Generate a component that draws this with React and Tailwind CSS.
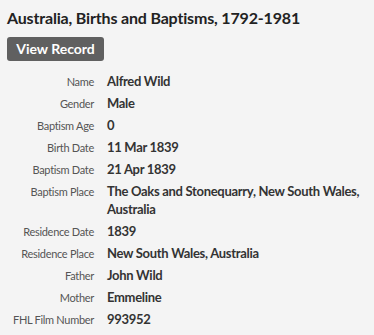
const rows = [
  ['Name', 'Alfred Wild'],
  ['Gender', 'Male'],
  ['Baptism Age', '0'],
  ['Birth Date', '11 Mar 1839'],
  ['Baptism Date', '21 Apr 1839'],
  ['Baptism Place', 'The Oaks and Stonequarry, New South Wales, Australia'],
  ['Residence Date', '1839'],
  ['Residence Place', 'New South Wales, Australia'],
  ['Father', 'John Wild'],
  ['Mother', 'Emmeline'],
  ['FHL Film Number', '993952'],
]

export default function App() {
  return (
    <div
      className="h-[335px] w-[374px] bg-[#f4f4f4] px-[7px] pt-[7px] text-[#333]"
      style={{ fontFamily: 'Lato, "Liberation Sans", sans-serif' }}
    >
      <h1 className="text-[16px] font-bold leading-[22px] tracking-[-0.17px] text-[#222]">
        Australia, Births and Baptisms, 1792-1981
      </h1>
      <button className="mt-[8px] h-[24px] w-[97px] rounded-[3px] bg-[#606060] text-[14px] font-bold leading-[24px] text-white">
        View Record
      </button>

      {/* record fields */}
      <div className="mt-[11px] grid grid-cols-[87px_1fr] items-baseline gap-x-[13px] gap-y-[4px]">
        {rows.map(([label, value]) => (
          <div key={label} className="contents">
            <div className="text-right text-[11px] leading-[16px] tracking-[-0.3px] text-[#555]">
              {label}
            </div>
            <div className="pr-[4px] text-[13px] font-bold leading-[18px] tracking-[-0.3px] text-[#333]">
              {value}
            </div>
          </div>
        ))}
      </div>
    </div>
  )
}
